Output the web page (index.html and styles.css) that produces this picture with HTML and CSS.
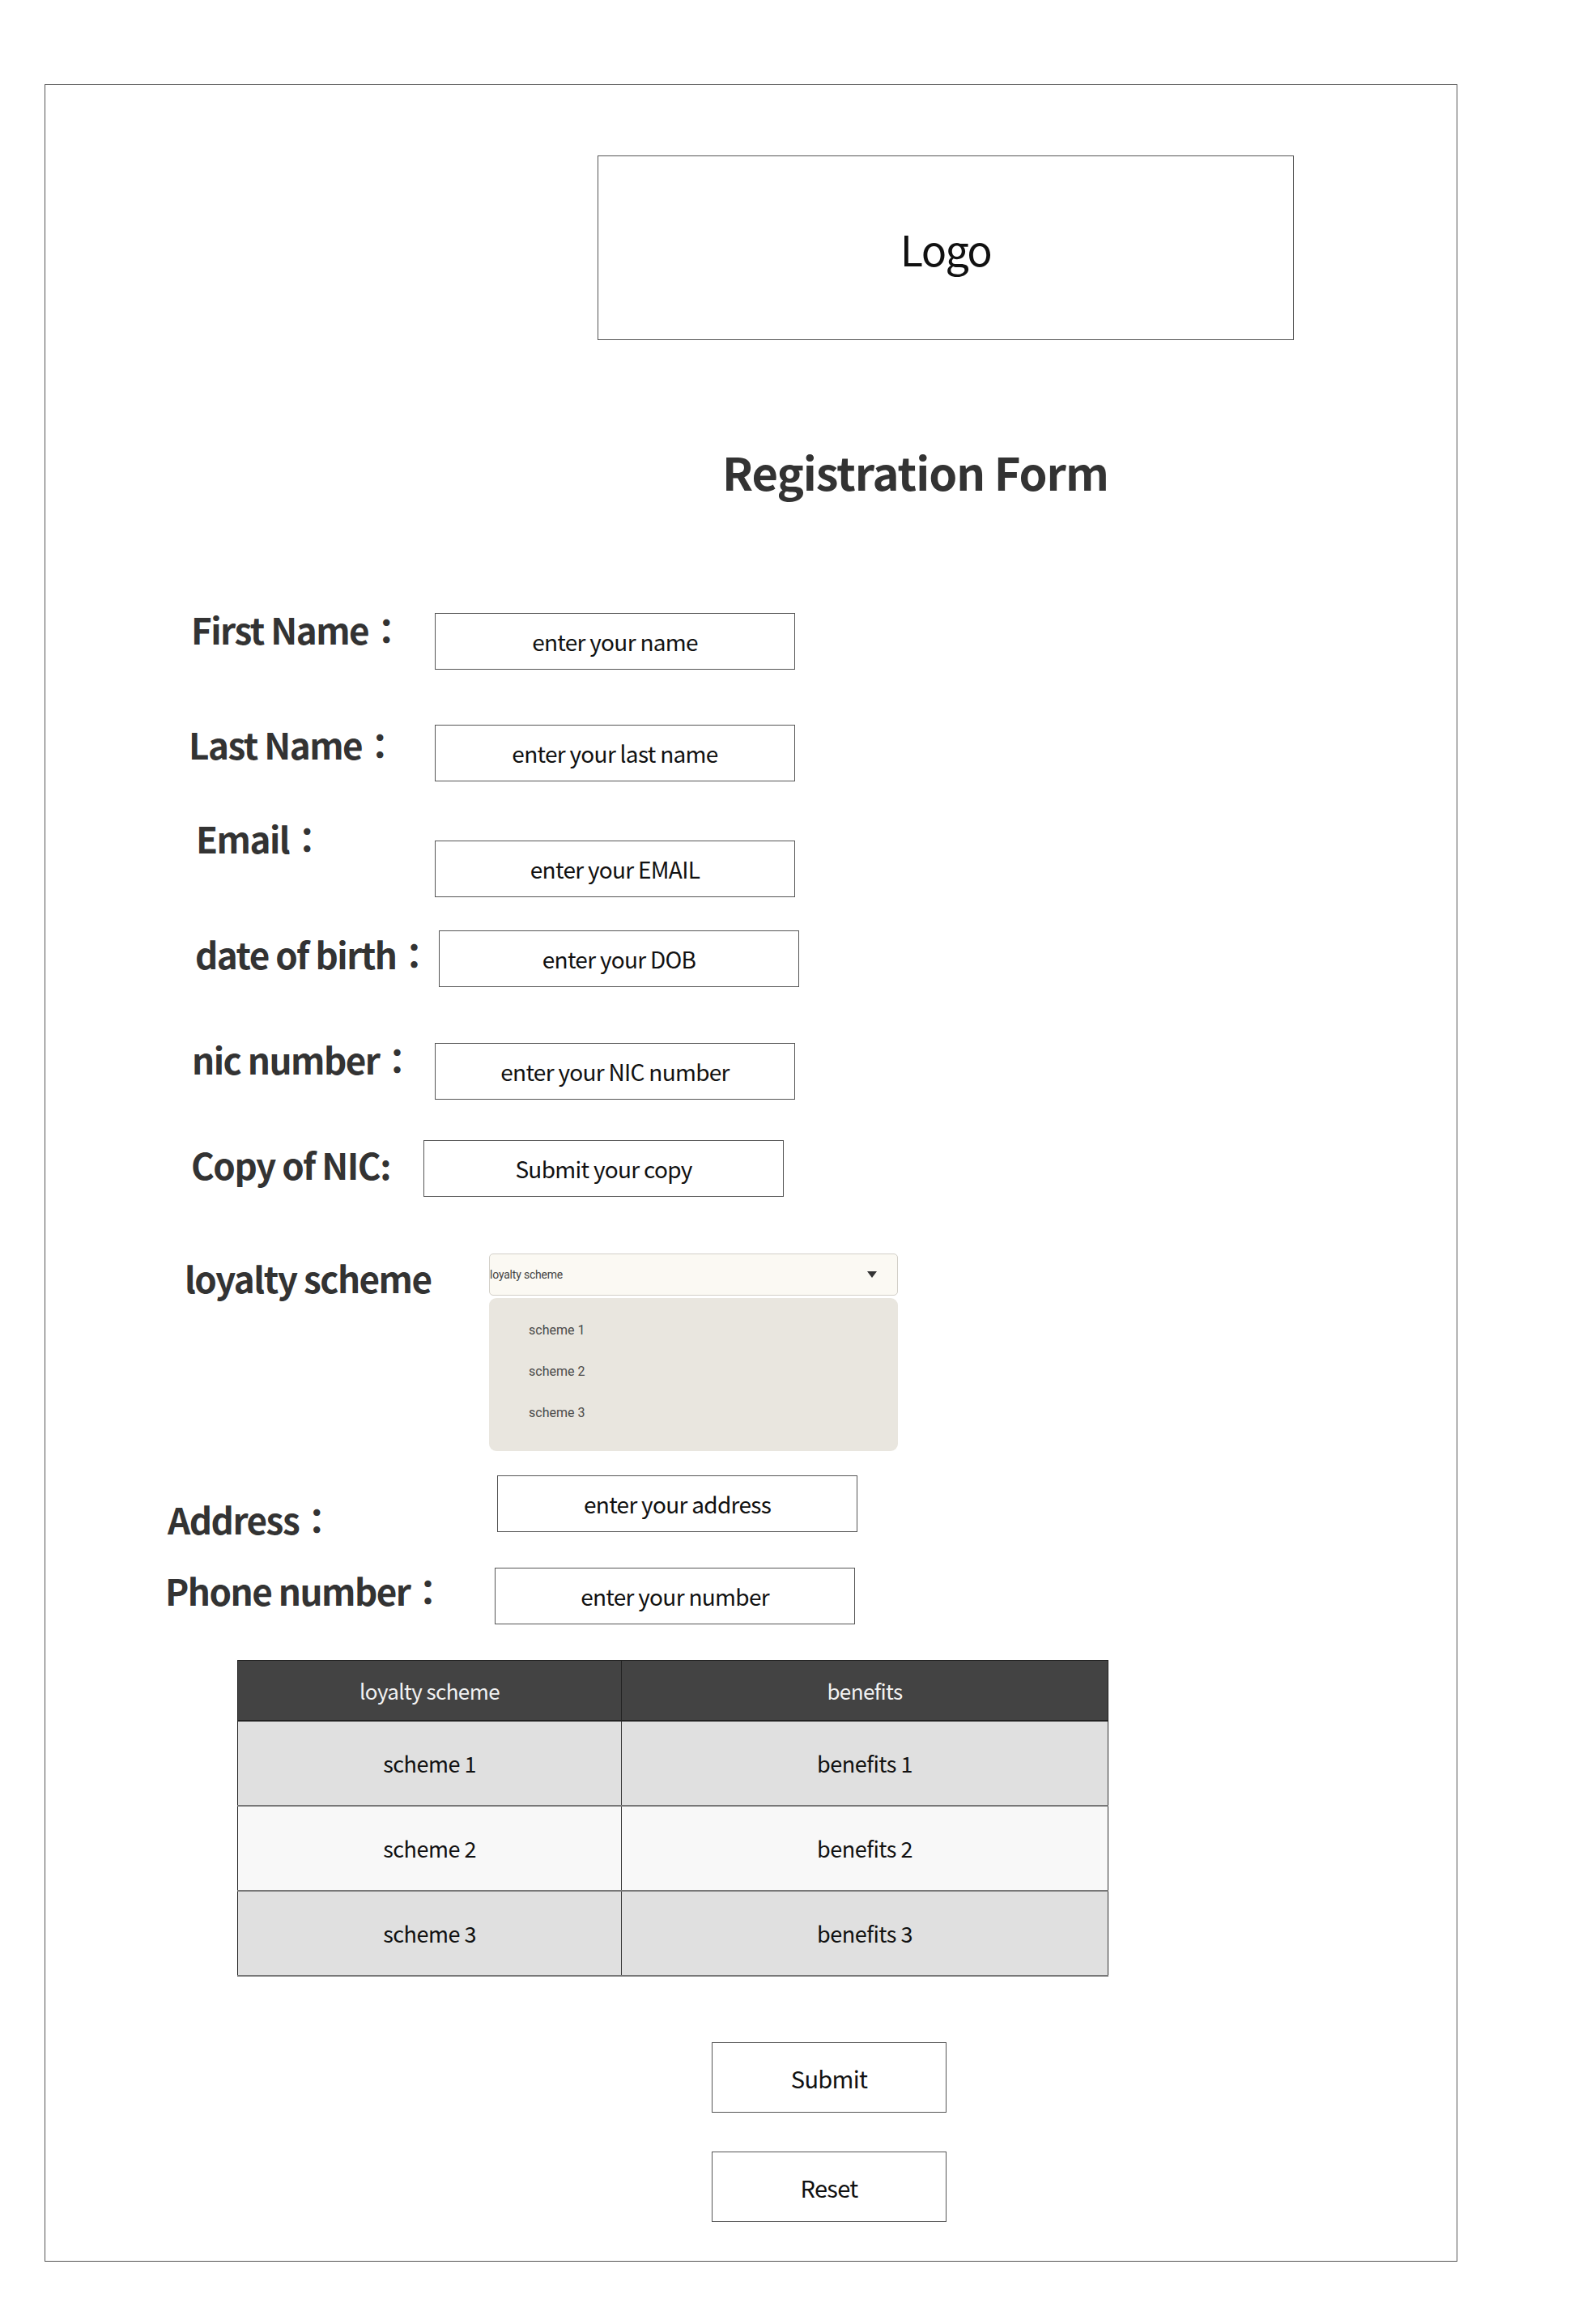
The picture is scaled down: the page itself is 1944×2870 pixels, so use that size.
FILE: index.html
```html
<!DOCTYPE html>
<html lang="en">
<head>
<meta charset="utf-8">
<title>Registration Form</title>
<link rel="stylesheet" href="styles.css">
</head>
<body>
<div class="frame">
  <div class="logo">Logo</div>
  <h1 class="title">Registration Form</h1>

  <div class="row r1"><div class="lbl">First Name：</div><div class="field">enter your name</div></div>
  <div class="row r2"><div class="lbl">Last Name：</div><div class="field">enter your last name</div></div>
  <div class="row r3"><div class="lbl">Email：</div><div class="field">enter your EMAIL</div></div>
  <div class="row r4"><div class="lbl">date of birth：</div><div class="field">enter your DOB</div></div>
  <div class="row r5"><div class="lbl">nic number：</div><div class="field">enter your NIC number</div></div>
  <div class="row r6"><div class="lbl">Copy of NIC:</div><div class="field">Submit your copy</div></div>

  <div class="row r7">
    <div class="lbl">loyalty scheme</div>
    <div class="select-wrap">
      <div class="select"><span>loyalty scheme</span><span class="caret"></span></div>
      <div class="panel">
        <div class="opt">scheme 1</div>
        <div class="opt">scheme 2</div>
        <div class="opt">scheme 3</div>
      </div>
    </div>
  </div>

  <div class="row r8"><div class="lbl">Address：</div><div class="field">enter your address</div></div>
  <div class="row r9"><div class="lbl">Phone number：</div><div class="field">enter your number</div></div>

  <table class="tbl">
    <thead>
      <tr><th class="c1">loyalty scheme</th><th>benefits</th></tr>
    </thead>
    <tbody>
      <tr class="odd"><td>scheme 1</td><td>benefits 1</td></tr>
      <tr class="even"><td>scheme 2</td><td>benefits 2</td></tr>
      <tr class="odd"><td>scheme 3</td><td>benefits 3</td></tr>
    </tbody>
  </table>

  <div class="btn submit">Submit</div>
  <div class="btn reset">Reset</div>
</div>
</body>
</html>
```
FILE: styles.css
```css
html, body {
  margin: 0;
  padding: 0;
  background: #ffffff;
}

body {
  font-family: "Noto Sans CJK JP", "Noto Sans CJK SC", "Noto Sans", sans-serif;
  color: #111;
}

.frame {
  margin: 104px 0 0 55px;
  width: 1745px;
  height: 2689px;
  border: 1px solid #555;
  box-sizing: border-box;
  overflow: hidden;
}

.logo {
  margin: 87px 0 0 682px;
  width: 860px;
  height: 228px;
  border: 1px solid #555;
  box-sizing: border-box;
  display: flex;
  align-items: center;
  justify-content: center;
  font-size: 52px;
  letter-spacing: -1.7px;
  color: #111;
}

.title {
  margin: 134px 0 0 836px;
  font-size: 56px;
  line-height: 1;
  font-weight: 700;
  letter-spacing: -1px;
  color: #333;
  white-space: nowrap;
}

.row {
  display: flex;
  align-items: flex-start;
}

.lbl {
  flex: none;
  font-size: 44px;
  font-weight: 700;
  line-height: 1;
  letter-spacing: -1.5px;
  color: #333;
  white-space: nowrap;
}

.field {
  flex: none;
  width: 445px;
  height: 70px;
  border: 1px solid #555;
  box-sizing: border-box;
  display: flex;
  align-items: center;
  justify-content: center;
  font-size: 28px;
  letter-spacing: -0.7px;
  color: #111;
  white-space: nowrap;
}

.r1 { margin-top: 147px; }
.r1 .lbl { margin: -2px 0 0 180px; width: 301px; }
.r2 { margin-top: 68px; }
.r2 .lbl { margin: 2px 0 0 177px; width: 304px; }
.r3 { margin-top: 73px; }
.r3 .lbl { margin: -25px 0 0 186px; width: 295px; }
.r4 { margin-top: 41px; }
.r4 .lbl { margin: 7px 0 0 185px; width: 301px; }
.r5 { margin-top: 69px; }
.r5 .lbl { margin: -2px 0 0 181px; width: 300px; }
.r6 { margin-top: 50px; }
.r6 .lbl { margin: 8px 0 0 180px; width: 287px; }
.r7 { margin-top: 70px; }
.r7 .lbl { margin: 8px 0 0 172px; width: 376px; }
.r8 { margin-top: 30px; height: 70px; }
.r8 .lbl { margin: 32px 0 0 151px; width: 407px; }
.r9 { margin-top: 44px; }
.r9 .lbl { margin: 6px 0 0 148px; width: 407px; }

.select-wrap {
  flex: none;
  width: 505px;
}

.select {
  height: 52px;
  box-sizing: border-box;
  background: #fbf9f3;
  border: 1px solid #d2cfc8;
  border-radius: 5px;
  display: flex;
  align-items: center;
  justify-content: space-between;
  padding: 0 25px 0 0;
  font-family: Roboto, "Noto Sans", sans-serif;
  font-size: 14px;
  letter-spacing: -0.2px;
  color: #444;
}

.caret {
  width: 0;
  height: 0;
  border-left: 6.5px solid transparent;
  border-right: 6.5px solid transparent;
  border-top: 8px solid #333;
  margin-top: -1px;
}

.panel {
  margin-top: 3px;
  height: 189px;
  box-sizing: border-box;
  background: #e9e6df;
  border-radius: 9px;
  padding: 14px 0 0 49px;
}

.opt {
  height: 51px;
  line-height: 51px;
  font-family: Roboto, "Noto Sans", sans-serif;
  font-size: 16px;
  color: #4a4a4a;
}

.tbl {
  margin: 44px 0 0 237px;
  width: 1076px;
  border-collapse: collapse;
  table-layout: fixed;
  border: 1px solid #222;
}

.tbl th,
.tbl td {
  padding: 0;
  text-align: center;
  font-weight: 400;
}

.tbl th {
  height: 73px;
  background: #434343;
  color: #f2f2f2;
  font-size: 26px;
  letter-spacing: -0.6px;
  border-right: 1px solid #222;
  border-bottom: 2px solid #222;
}

.tbl th.c1 {
  width: 473px;
}

.tbl td {
  height: 103px;
  color: #111;
  font-size: 27px;
  letter-spacing: -0.5px;
  border-right: 1px solid #333;
  border-bottom: 2px solid #777;
}

.tbl tr.odd td { background: #e0e0e0; }
.tbl tr.even td { background: #f8f8f8; }

.btn {
  margin-left: 823px;
  width: 290px;
  height: 87px;
  border: 1px solid #555;
  box-sizing: border-box;
  display: flex;
  align-items: center;
  justify-content: center;
  font-size: 29px;
  letter-spacing: -0.7px;
  color: #111;
}

.submit { margin-top: 81px; }
.reset { margin-top: 48px; }
```
